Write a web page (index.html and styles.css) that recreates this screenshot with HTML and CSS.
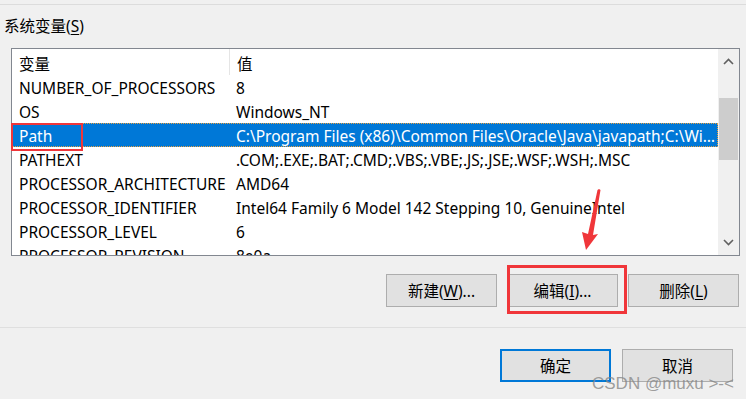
FILE: index.html
```html
<!DOCTYPE html>
<html>
<head>
    <title>环境变量</title>
    <link rel="stylesheet" href="styles.css">
</head>
<body>
    <div class="dialog">
        <div class="top-rule"></div>
        <div class="group-title"><span>系统变量(<u>S</u>)</span></div>

        <div class="listbox">
            <div class="list-content">
                <div class="list-head">
                    <div class="col-name">变量</div>
                    <div class="col-value">值</div>
                </div>
                <div class="row"><div class="col-name">NUMBER_OF_PROCESSORS</div><div class="col-value">8</div></div>
                <div class="row"><div class="col-name">OS</div><div class="col-value">Windows_NT</div></div>
                <div class="row selected"><div class="col-name">Path</div><div class="col-value">C:\Program Files (x86)\Common Files\Oracle\Java\javapath;C:\Windows\system32;C:\Windows</div></div>
                <div class="row"><div class="col-name">PATHEXT</div><div class="col-value">.COM;.EXE;.BAT;.CMD;.VBS;.VBE;.JS;.JSE;.WSF;.WSH;.MSC</div></div>
                <div class="row"><div class="col-name">PROCESSOR_ARCHITECTURE</div><div class="col-value">AMD64</div></div>
                <div class="row"><div class="col-name">PROCESSOR_IDENTIFIER</div><div class="col-value">Intel64 Family 6 Model 142 Stepping 10, GenuineIntel</div></div>
                <div class="row"><div class="col-name">PROCESSOR_LEVEL</div><div class="col-value">6</div></div>
                <div class="row"><div class="col-name">PROCESSOR_REVISION</div><div class="col-value">8e0a</div></div>
            </div>
            <div class="scrollbar">
                <svg class="sb-arrow" width="21" height="24" viewBox="0 0 21 24"><path d="M6 15 L10.5 10.5 L15 15" fill="none" stroke="#606060" stroke-width="1.6"/></svg>
                <div class="sb-track"><div class="sb-thumb"></div></div>
                <svg class="sb-arrow" width="21" height="24" viewBox="0 0 21 24"><path d="M6 9 L10.5 13.5 L15 9" fill="none" stroke="#606060" stroke-width="1.6"/></svg>
            </div>
        </div>

        <div class="list-buttons">
            <button class="btn">新建(<u>W</u>)...</button>
            <button class="btn">编辑(<u>I</u>)...</button>
            <button class="btn">删除(<u>L</u>)</button>
        </div>

        <div class="bottom-rule"></div>

        <div class="dialog-buttons">
            <button class="btn btn-default">确定</button>
            <button class="btn">取消</button>
        </div>
    </div>

    <!-- 标注 -->
    <div class="mark mark-path"></div>
    <div class="mark mark-edit"></div>
    <svg class="arrow" width="30" height="66" viewBox="0 0 30 66">
        <polygon points="22,0 23.5,1 16,46 21,45 9,61 5,43 11,45 20.5,1" fill="#f0363a"/>
    </svg>
    <div class="watermark">CSDN @muxu &gt;-&lt;</div>
</body>
</html>
```
FILE: styles.css
```css
body {
    margin: 0;
    background: #f0f0f0;
    font-family: "Noto Sans", "Noto Sans CJK SC", sans-serif;
    font-size: 15.5px;
    color: #000;
}

.dialog {
    width: 746px;
    height: 399px;
    position: relative;
    overflow: hidden;
}

.top-rule {
    margin-top: 4px;
    height: 1px;
    background: #dcdcdc;
}

.group-title {
    display: flex;
    align-items: center;
    height: 30px;
    margin-top: 6px;
    padding-left: 4px;
    line-height: 20px;
}
.group-title u {
    text-underline-offset: 2px;
}

/* 列表 */
.listbox {
    display: flex;
    margin: 7px 0 0 11px;
    width: 727px;
    height: 206px;
    border: 1px solid #828790;
    background: #fff;
}
.list-content {
    width: 706px;
    overflow: hidden;
}
.list-head {
    display: flex;
    height: 26px;
    line-height: 21px;
}
.list-head .col-name,
.list-head .col-value {
    padding-top: 5px;
}
.list-head .col-name {
    border-right: 1px solid #e5e5e5;
}
.row {
    display: flex;
    height: 24px;
    line-height: 22px;
}
.row .col-name,
.row .col-value {
    padding-top: 2px;
}
.col-name {
    width: 210px;
    flex: none;
    padding-left: 7px;
    white-space: nowrap;
}
.col-value {
    flex: 1;
    min-width: 0;
    padding-left: 7px;
    padding-right: 2px;
    white-space: nowrap;
    overflow: hidden;
    text-overflow: ellipsis;
}
.row.selected {
    background: #0078d7;
    color: #fff;
    outline: 1px dotted #e8a040;
    outline-offset: -1px;
}

.scrollbar {
    width: 21px;
    background: #f0f0f0;
    display: flex;
    flex-direction: column;
}
.sb-arrow {
    display: block;
    flex: none;
}
.sb-track {
    flex: 1;
    padding-top: 25px;
}
.sb-thumb {
    margin: 0 1px;
    height: 62px;
    background: #cdcdcd;
}

/* 按钮 */
.list-buttons {
    display: flex;
    justify-content: flex-end;
    gap: 10px;
    width: 739px;
    margin-top: 18px;
}
.btn {
    font-family: inherit;
    font-size: 15.5px;
    color: #000;
    background: #e1e1e1;
    border: 1px solid #adadad;
    width: 111px;
    height: 33px;
    padding: 0;
    margin: 0;
}
.btn u {
    text-underline-offset: 2px;
}

.bottom-rule {
    margin-top: 20px;
    height: 1px;
    background: #dfdfdf;
}

.dialog-buttons {
    display: flex;
    gap: 11px;
    margin: 21px 0 0 500px;
}
.btn-default {
    border: 2px solid #0078d7;
}

/* 标注 */
.mark {
    position: absolute;
    border: 2px solid #f0363a;
}
.mark-path {
    left: 11px;
    top: 123px;
    width: 68px;
    height: 24px;
}
.mark-edit {
    left: 507px;
    top: 265px;
    width: 114px;
    height: 43px;
    border-width: 3px;
}
.arrow {
    position: absolute;
    left: 577px;
    top: 189px;
}
.watermark {
    position: absolute;
    left: 592px;
    top: 374px;
    font-family: "Liberation Sans", sans-serif;
    font-size: 17px;
    color: rgba(135, 135, 135, 0.8);
}
```
